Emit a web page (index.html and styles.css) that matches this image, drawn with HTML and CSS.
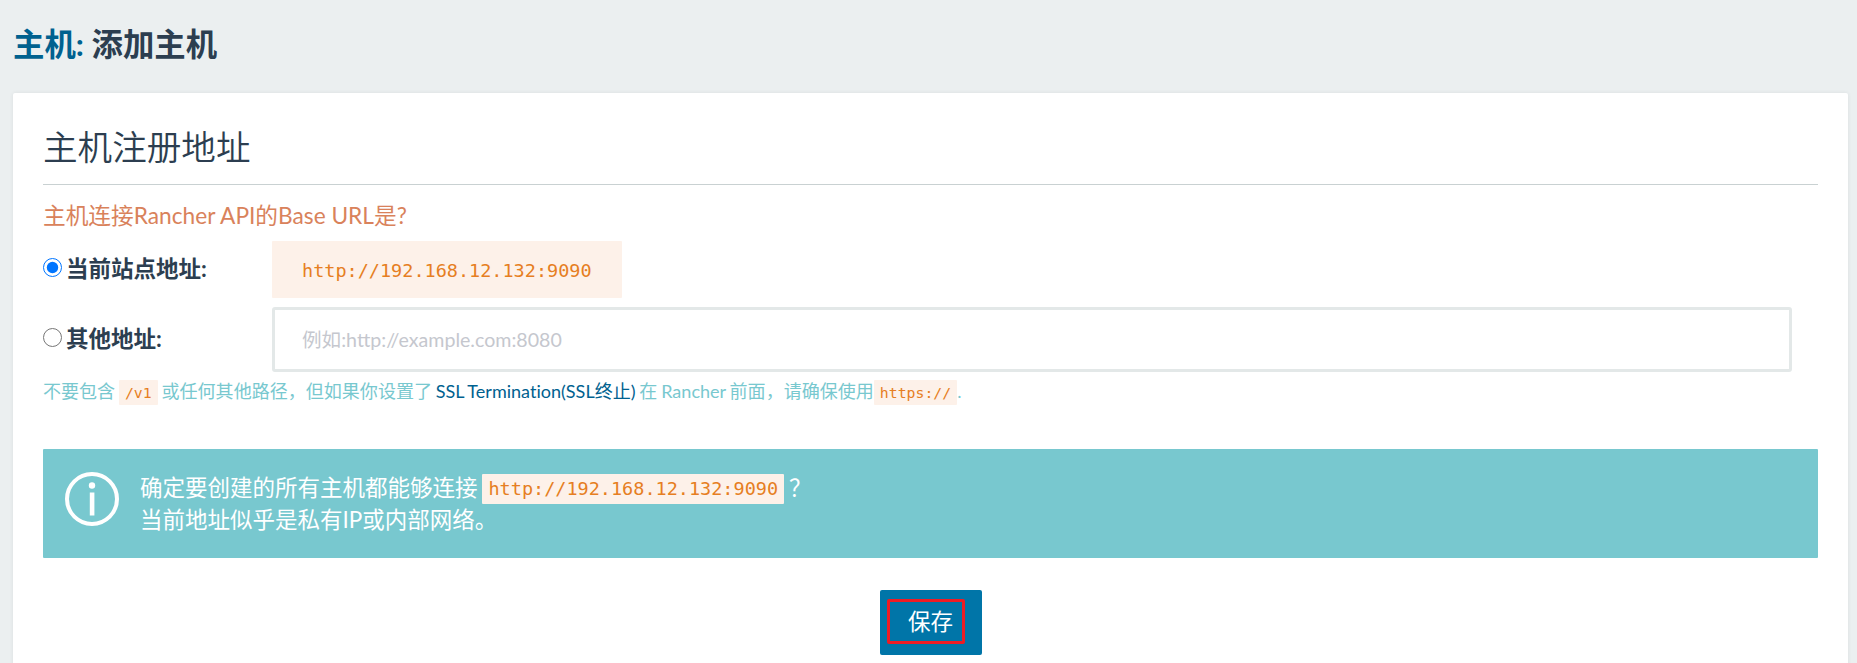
FILE: index.html
```
<!DOCTYPE html>
<html lang="zh-CN">
<head>
<meta charset="utf-8">
<title>添加主机</title>
<link rel="stylesheet" href="styles.css">
</head>
<body>
<header class="page-header">
  <h1><a class="crumb">主机:</a> <span>添加主机</span></h1>
</header>
<main class="card">
  <h2 class="section-title">主机注册地址</h2>
  <p class="question">主机连接Rancher API的Base URL是?</p>
  <div class="option current">
    <label class="option-label"><input class="radio" type="radio" name="host" checked><span>当前站点地址:</span></label>
    <code class="url-box">http://192.168.12.132:9090</code>
  </div>
  <div class="option other">
    <label class="option-label"><input class="radio" type="radio" name="host"><span>其他地址:</span></label>
    <input class="url-input" type="text" placeholder="例如:http://example.com:8080">
  </div>
  <p class="help">不要包含 <code>/v1</code> 或任何其他路径，但如果你设置了 <a>SSL Termination(SSL终止)</a> 在 Rancher 前面，请确保使用<code>https://</code>.</p>
  <section class="banner">
    <svg class="info-icon" viewBox="0 0 56 56"><circle cx="28" cy="28" r="25" fill="none" stroke="#fff" stroke-width="4"/><circle cx="28" cy="14.5" r="3.2" fill="#fff"/><rect x="25.8" y="21.5" width="4.6" height="23" fill="#fff"/></svg>
    <div class="banner-text">
      <p>确定要创建的所有主机都能够连接 <code>http://192.168.12.132:9090</code> ？</p>
      <p>当前地址似乎是私有IP或内部网络。</p>
    </div>
  </section>
  <div class="actions"><button class="save">保存<span class="marker"></span></button></div>
</main>
</body>
</html>
```
FILE: styles.css
```
* { box-sizing: border-box; }
body {
  margin: 0;
  height: 663px;
  overflow: hidden;
  background: #ebeff0;
  color: #2c3e50;
  font: 400 22.5px/32px Lato, "Noto Sans CJK SC", sans-serif;
  font-variant-ligatures: none;
}
h1, h2, p { margin: 0; }
a { color: #00618f; }
code {
  font-family: "DejaVu Sans Mono", monospace;
  font-size: 18.5px;
  color: #e67e22;
  background: #fdf1e9;
  border-radius: 1px;
}
.page-header { height: 93px; padding: 20px 13px 0; }
.page-header h1 { font-size: 31.4px; line-height: 48px; font-weight: 700; white-space: nowrap; }
.card {
  height: 600px;
  margin: 0 9px 0 13px;
  padding: 30px 30px 0;
  background: #fff;
  border-radius: 2px;
  box-shadow: 0 0 4px rgba(0, 0, 0, .07);
}
.section-title {
  height: 62px;
  border-bottom: 1px solid #c9d1d2;
  font-size: 34.6px;
  line-height: 47px;
  font-weight: 350;
}
.question { height: 56px; padding-top: 15px; color: #d9825b; font-size: 22.7px; }
.option { display: flex; }
.option-label { display: flex; width: 229px; align-items: center; padding-bottom: 1px; font-weight: 700; }
.radio { width: 19px; height: 19px; margin: 0 4px 4px 0; }
.current { height: 57px; }
.url-box { width: 350px; height: 57px; padding-left: 30px; line-height: 59px; }
.other { height: 65px; margin-top: 9px; }
.url-input {
  width: 1520px;
  height: 65px;
  padding: 0 27px;
  border: 3px solid #e3e8e8;
  border-radius: 3px;
  background: #fff;
  font: 400 19.6px Lato, "Noto Sans CJK SC", sans-serif;
}
.url-input::placeholder { color: #c5c7ce; }
.help { height: 77px; padding-top: 4px; font-size: 18.05px; line-height: 30px; color: #78c8cf; white-space: nowrap; word-spacing: -0.8px; }
.help code { padding: 4px 6px; font-size: 14.8px; word-spacing: 0; }
.banner {
  display: flex;
  height: 109px;
  padding: 23px 0 0 21px;
  border-radius: 1px;
  background: #78c8cf;
  color: #fff;
}
.info-icon { width: 56px; height: 56px; margin: -1px 20px 0 0; }
.banner-text p { height: 32px; white-space: nowrap; word-spacing: -0.8px; }
.banner-text code { display: inline-block; height: 30px; padding: 0 6px; line-height: 30px; vertical-align: 1px; }
.actions { display: flex; justify-content: center; padding-top: 32px; }
.save {
  position: relative;
  width: 102px;
  height: 65px;
  padding: 0 0 2px;
  border: 0;
  border-radius: 2px;
  background: #0075a8;
  color: #fff;
  font: 400 22.5px/32px Lato, "Noto Sans CJK SC", sans-serif;
}
.marker {
  position: absolute;
  left: 7px;
  top: 9px;
  width: 78px;
  height: 45px;
  border: 3px solid #ed1c24;
  border-radius: 2px;
}
```
